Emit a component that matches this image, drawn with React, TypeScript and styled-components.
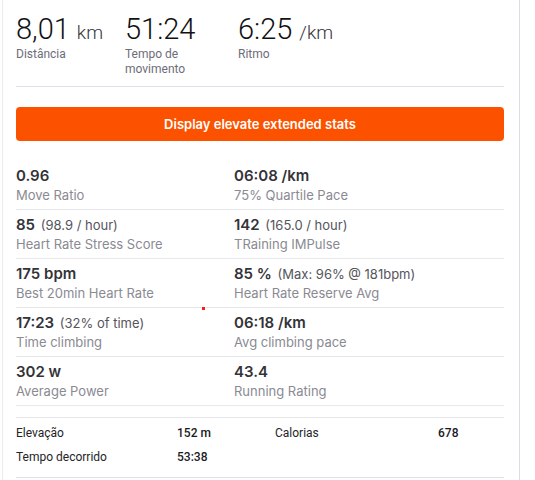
import React from 'react';
import styled, { createGlobalStyle } from 'styled-components';

const GlobalStyle = createGlobalStyle`
  body {
    margin: 0;
    background: #fff;
    font-family: Roboto, "Liberation Sans", sans-serif;
  }
`;

const Page = styled.div`
  padding-left: 2px;
`;

const Card = styled.section`
  position: relative;
  width: 488px;
  padding: 0 15px 0 13px;
  border-left: 1px solid #ececf0;
  border-right: 1px solid #dcdce2;
  min-height: 480px;
`;

const Summary = styled.ul`
  display: flex;
  list-style: none;
  margin: 0;
  padding: 12px 0 9px;
  border-bottom: 1px solid #dfdfe8;
`;

const SummaryItem = styled.li<{ $width?: number }>`
  width: ${(p) => (p.$width ? `${p.$width}px` : 'auto')};
`;

const BigValue = styled.div`
  font-size: 29px;
  line-height: 34px;
  font-weight: 300;
  color: #111114;
  white-space: nowrap;
`;

const Unit = styled.abbr`
  font-size: 19px;
  line-height: 1;
  margin-left: 7px;
  color: #333338;
  text-decoration: none;
`;

const SummaryLabel = styled.div`
  max-width: 72px;
  font-size: 12px;
  line-height: 15px;
  color: #6d6d78;
  margin-top: 1px;
`;

const ExtendedButton = styled.button`
  display: block;
  width: 100%;
  height: 34px;
  margin-top: 20px;
  border: none;
  border-radius: 4px;
  background: #fc5200;
  color: #fff;
  font-family: Inter, "Liberation Sans", sans-serif;
  font-size: 13px;
  font-weight: 600;
  cursor: pointer;
`;

const StatGrid = styled.div`
  margin-top: 20px;
`;

const StatRow = styled.div`
  display: grid;
  grid-template-columns: 218px 1fr;
  border-bottom: 1px solid #e6e6eb;
`;

const Stat = styled.div`
  padding: 5px 0;
  font-family: Inter, "Liberation Sans", sans-serif;
`;

const StatValue = styled.div`
  font-size: 15px;
  line-height: 20px;
  font-weight: 600;
  color: #333338;
`;

const StatExtra = styled.span`
  font-size: 13px;
  font-weight: 400;
  color: #55555c;
  margin-left: 2px;
`;

const StatLabel = styled.div`
  font-size: 13px;
  line-height: 18px;
  color: #8a8a92;
`;

const Details = styled.div`
  display: grid;
  grid-template-columns: 161px 98px 163px 1fr;
  margin-top: 11px;
  padding: 3px 0 8px;
  border-top: 1px solid #e6e6eb;
  border-bottom: 1px solid #dfdfe8;
  font-size: 12px;
  line-height: 24px;
  color: #242428;
`;

const DetailValue = styled.div`
  font-weight: 500;
  color: #1a1a24;
`;

const Speck = styled.span`
  position: absolute;
  left: 199px;
  top: 307px;
  width: 3px;
  height: 3px;
  background: #ff1a1a;
`;

interface ExtStat {
  value: string;
  extra?: string;
  label: string;
}

const rows: [ExtStat, ExtStat][] = [
  [
    { value: '0.96', label: 'Move Ratio' },
    { value: '06:08 /km', label: '75% Quartile Pace' },
  ],
  [
    { value: '85', extra: '(98.9 / hour)', label: 'Heart Rate Stress Score' },
    { value: '142', extra: '(165.0 / hour)', label: 'TRaining IMPulse' },
  ],
  [
    { value: '175 bpm', label: 'Best 20min Heart Rate' },
    { value: '85 %', extra: '(Max: 96% @ 181bpm)', label: 'Heart Rate Reserve Avg' },
  ],
  [
    { value: '17:23', extra: '(32% of time)', label: 'Time climbing' },
    { value: '06:18 /km', label: 'Avg climbing pace' },
  ],
  [
    { value: '302 w', label: 'Average Power' },
    { value: '43.4', label: 'Running Rating' },
  ],
];

const StatCell: React.FunctionComponent<{ stat: ExtStat }> = ({ stat }) => (
  <Stat>
    <StatValue>
      {stat.value}
      {stat.extra && <StatExtra> {stat.extra}</StatExtra>}
    </StatValue>
    <StatLabel>{stat.label}</StatLabel>
  </Stat>
);

export default function App() {
  return (
    <Page>
      <GlobalStyle />
      <Card>
        <Summary>
          <SummaryItem $width={109}>
            <BigValue>
              8,01<Unit>km</Unit>
            </BigValue>
            <SummaryLabel>Distância</SummaryLabel>
          </SummaryItem>
          <SummaryItem $width={113}>
            <BigValue>51:24</BigValue>
            <SummaryLabel>Tempo de movimento</SummaryLabel>
          </SummaryItem>
          <SummaryItem>
            <BigValue>
              6:25<Unit>/km</Unit>
            </BigValue>
            <SummaryLabel>Ritmo</SummaryLabel>
          </SummaryItem>
        </Summary>

        <ExtendedButton>Display elevate extended stats</ExtendedButton>

        <StatGrid>
          {rows.map(([left, right], i) => (
            <StatRow key={i}>
              <StatCell stat={left} />
              <StatCell stat={right} />
            </StatRow>
          ))}
        </StatGrid>

        <Details>
          <div>Elevação</div>
          <DetailValue>152 m</DetailValue>
          <div>Calorias</div>
          <DetailValue>678</DetailValue>
          <div>Tempo decorrido</div>
          <DetailValue>53:38</DetailValue>
        </Details>

        <Speck />
      </Card>
    </Page>
  );
}
